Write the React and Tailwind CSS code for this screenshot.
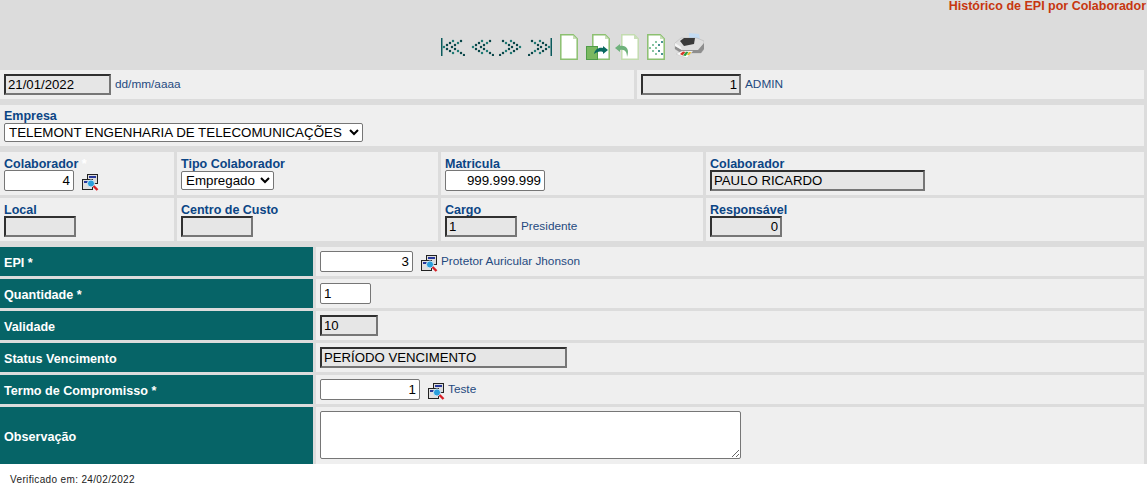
import React from 'react';

const sans = "font-['Liberation_Sans',Arial,sans-serif]";
const lbl = `${sans} text-[12.5px] leading-[11px] font-bold text-[#0b4585]`;
const hint = `${sans} text-[11.8px] text-[#1f4a80]`;
const editBox = `h-[21px] rounded-[2px] border border-[#767676] bg-white px-[3px] text-[13.333px] text-black outline-none ${sans}`;
const roBox = `h-[21px] border-2 border-t-[#303030] border-l-[#303030] border-r-[#767676] border-b-[#767676] bg-[#e6e6e6] px-[2px] text-[13.2px] text-black outline-none ${sans}`;

// dot chevrons of the paging buttons, pointing left
const chevronDots = [
  [3, 9], [6, 7], [9, 5], [12, 3], [6, 11], [9, 13], [12, 15],
  [11, 9], [14, 7], [17, 5], [20, 3], [14, 11], [17, 13], [20, 15], [23, 17],
];

const NavIcon = ({ flip, bar }) => (
  <svg width="24" height="18" viewBox="0 0 24 18" className={flip ? '-scale-x-100' : ''}>
    {bar && <rect x="0" y="0" width="1.5" height="18" fill="#0a5a5c" />}
    {chevronDots.map(([x, y], i) => (
      <circle key={i} cx={x} cy={y} r="1.25" fill={i % 3 === 0 ? '#1f7a74' : '#0a4649'} />
    ))}
  </svg>
);

const Doc = ({ wide, light, children }) => (
  <svg width={wide ? 24 : 18} height="26" viewBox={`${wide ? -6 : 0} 0 ${wide ? 24 : 18} 26`}>
    <path d="M.8.8h12.4l4 4v20.4H.8z" fill="#fff" stroke={light ? '#c3dcb0' : '#8cc070'} strokeWidth="1.5" />
    <path d="M13 1v4h4z" fill="#c9dfb9" />
    {children}
  </svg>
);

const SearchIcon = () => (
  <svg width="17" height="17" viewBox="0 0 17 17" className="shrink-0">
    <rect x="5.5" y="0.5" width="10" height="9" fill="#dcdcdc" stroke="#222" />
    <rect x="7" y="2" width="7" height="2" fill="#27389c" />
    <rect x="0.5" y="5.5" width="10" height="10" fill="#e0e0e0" stroke="#222" />
    <rect x="2" y="7" width="5" height="2" fill="#27389c" />
    <circle cx="9" cy="9.5" r="3.6" fill="#2a9fdc" stroke="#d5ecf8" />
    <path d="M11.5 12l4 4" stroke="#d81f26" strokeWidth="2.4" />
  </svg>
);

const PrinterIcon = () => (
  <svg width="30" height="25" viewBox="0 0 30 25">
    <path d="M15 0l10 1 1 6-11 1z" fill="#c4dcf3" />
    <path d="M1 10l6-5h16l7 3v8l-3 4H7l-6-4z" fill="#dedede" stroke="#b0b0b0" strokeWidth="0.5" />
    <path d="M6 8l4-3h11l-1 6-10 2z" fill="#3a3a3a" />
    <path d="M1 13l7 4h16l6-7v6l-3 4H7l-6-4z" fill="#8e8e8e" />
    <path d="M1 10l6 4 1 3-7-4z" fill="#f6f6f6" />
    <path d="M2 21l6-3h11l-6 7z" fill="#fdfdfd" stroke="#b8b8b8" strokeWidth="0.4" />
    <path d="M6 21l3-2.500 2.500 .5-3 3.500z" fill="#d8362a" />
    <path d="M9 22.500l3-3.700 2.500 .2-2.800 4z" fill="#2f9f3f" />
    <path d="M13 22l2-3 2.500 .2-2.500 3z" fill="#e8b62a" />
  </svg>
);

const Cell = ({ className = '', children }) => (
  <div className={`flex flex-col justify-end bg-[#efefef] pb-1 pl-1 ${className}`}>{children}</div>
);

const FormRow = ({ label, h = 'h-[29px]', children }) => (
  <div className={`flex gap-[3px] ${h}`}>
    <div className={`flex w-[313px] items-center bg-[#066467] pt-[3px] pl-1 text-[12.6px] font-bold text-white ${sans}`}>{label}</div>
    <div className="flex flex-1 items-center bg-[#efefef] pl-1">{children}</div>
  </div>
);

export default function App() {
  return (
    <div className="min-h-[494px] bg-white">
      <div className="bg-[#dcdcdc] pr-[3px]">
        {/* Title and toolbar */}
        <div className="h-[70px]">
          <div className={`-mr-[3px] pr-[1px] text-right text-[12.5px] leading-[12px] font-bold text-[#c7360f] ${sans}`}>
            Histórico de EPI por Colaborador
          </div>
          <div className="mt-[21px] flex h-[27px] items-center justify-center">
            <NavIcon bar />
            <span className="ml-[5px]"><NavIcon /></span>
            <span className="ml-[5px]"><NavIcon flip /></span>
            <span className="ml-[5px]"><NavIcon flip bar /></span>
            <span className="ml-[8px]"><Doc /></span>
            <span className="ml-[8px]">
              <Doc wide>
                <rect x="-5.500" y="12.500" width="11" height="13" fill="#7ab860" stroke="#4f9c48" />
                <path d="M2 20c1-5 5-7 9-6v-2l5 4-5 4v-2c-4-1-6 0-9 2z" fill="#0a6a60" />
              </Doc>
            </span>
            <span className="ml-[5px]">
              <Doc wide light>
                <path d="M6 23c0-5-2-8-7-7v2l-5-4 5-4v2c6-1 10 3 7 11z" fill="#6fb27c" />
              </Doc>
            </span>
            <span className="ml-[8px]">
              <Doc>
                <g fill="#5fb080">
                  <circle cx="3" cy="14" r="1" /><circle cx="6" cy="11" r="1" /><circle cx="6" cy="17" r="1" />
                  <circle cx="9" cy="8" r="1" /><circle cx="9" cy="14" r="1" /><circle cx="9" cy="20" r="1" />
                </g>
                <g fill="#0f6f6f">
                  <circle cx="12" cy="11" r="1" /><circle cx="12" cy="17" r="1" />
                  <circle cx="15" cy="8" r="1" /><circle cx="15" cy="20" r="1" />
                </g>
              </Doc>
            </span>
            <span className="ml-[9px] -mt-[2px]"><PrinterIcon /></span>
          </div>
        </div>

        {/* Date and user */}
        <div className="flex h-[29px] gap-[3px]">
          <div className="flex w-[634px] items-center gap-1 bg-[#efefef] pl-1">
            <input readOnly defaultValue="21/01/2022" className={`${roBox} w-[107px]`} />
            <span className={hint}>dd/mm/aaaa</span>
          </div>
          <div className="flex flex-1 items-center gap-1 bg-[#efefef] pl-1">
            <input readOnly defaultValue="1" className={`${roBox} w-[100px] text-right`} />
            <span className={hint}>ADMIN</span>
          </div>
        </div>

        {/* Company */}
        <Cell className="mt-[6px] h-[41px]">
          <label className={lbl}>Empresa</label>
          <select className={`mt-[1px] h-[19px] w-[359px] rounded-[2px] border border-[#767676] bg-white text-[13.333px] text-black ${sans}`}>
            <option>TELEMONT ENGENHARIA DE TELECOMUNICAÇÕES</option>
          </select>
        </Cell>

        {/* Employee details */}
        <div className="mt-[6px] grid h-[43px] grid-cols-[174px_261px_262px_1fr] gap-[3px]">
          <Cell>
            <label className={lbl}>
              Colaborador <span className="text-white">*</span>
            </label>
            <div className="flex items-end gap-2">
              <input readOnly defaultValue="4" className={`${editBox} w-[70px] text-right`} />
              <SearchIcon />
            </div>
          </Cell>
          <Cell>
            <label className={lbl}>Tipo Colaborador</label>
            <div className="flex h-[21px] items-center">
              <select className={`h-[19px] w-[93px] rounded-[2px] border border-[#767676] bg-white text-[13.333px] text-black ${sans}`}>
                <option>Empregado</option>
              </select>
            </div>
          </Cell>
          <Cell>
            <label className={lbl}>Matricula</label>
            <input readOnly defaultValue="999.999.999" className={`${editBox} w-[100px] text-right`} />
          </Cell>
          <Cell>
            <label className={lbl}>Colaborador</label>
            <input readOnly defaultValue="PAULO RICARDO" className={`${roBox} w-[215px]`} />
          </Cell>
        </div>

        <div className="mt-[3px] grid h-[43px] grid-cols-[174px_261px_262px_1fr] gap-[3px]">
          <Cell>
            <label className={lbl}>Local</label>
            <input readOnly className={`${roBox} w-[72px]`} />
          </Cell>
          <Cell>
            <label className={lbl}>Centro de Custo</label>
            <input readOnly className={`${roBox} w-[72px]`} />
          </Cell>
          <Cell>
            <label className={lbl}>Cargo</label>
            <div className="flex items-center gap-1">
              <input readOnly defaultValue="1" className={`${roBox} w-[72px]`} />
              <span className={hint}>Presidente</span>
            </div>
          </Cell>
          <Cell>
            <label className={`${lbl} text-[12.3px]`}>Responsável</label>
            <input readOnly defaultValue="0" className={`${roBox} w-[72px] text-right`} />
          </Cell>
        </div>

        {/* EPI data */}
        <div className="mt-[6px] flex flex-col gap-[3px]">
          <FormRow label="EPI *">
            <input readOnly defaultValue="3" className={`${editBox} w-[93px] text-right`} />
            <span className="ml-2 self-end pb-1"><SearchIcon /></span>
            <span className={`${hint} ml-[3px]`}>Protetor Auricular Jhonson</span>
          </FormRow>
          <FormRow label="Quantidade *">
            <input readOnly defaultValue="1" className={`${editBox} w-[51px]`} />
          </FormRow>
          <FormRow label="Validade">
            <input readOnly defaultValue="10" className={`${roBox} w-[58px]`} />
          </FormRow>
          <FormRow label="Status Vencimento">
            <input readOnly defaultValue="PERÍODO VENCIMENTO" className={`${roBox} w-[247px]`} />
          </FormRow>
          <FormRow label="Termo de Compromisso *">
            <input readOnly defaultValue="1" className={`${editBox} w-[100px] text-right`} />
            <span className="ml-2 self-end pb-1"><SearchIcon /></span>
            <span className={`${hint} ml-[3px]`}>Teste</span>
          </FormRow>
          <FormRow label="Observação" h="h-[57px]">
            <textarea className="mb-[1px] h-[48px] w-[421px] rounded-[2px] border border-[#767676] bg-white" />
          </FormRow>
        </div>
      </div>

      <div className={`pt-[9px] pl-[10px] text-[10px] leading-[14px] tracking-[0.35px] text-[#222] ${sans}`}>
        Verificado em: 24/02/2022
      </div>
    </div>
  );
}
